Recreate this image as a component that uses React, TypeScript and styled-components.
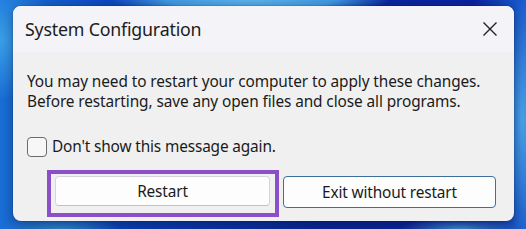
import React from 'react';
import styled, { createGlobalStyle } from 'styled-components';

const GlobalStyle = createGlobalStyle`
  html, body {
    margin: 0;
    padding: 0;
  }
  body {
    font-family: "Noto Sans", "Open Sans", sans-serif;
    color: #1b1b1b;
  }
`;

const Desktop = styled.div`
  width: 526px;
  height: 229px;
  box-sizing: border-box;
  padding: 6px 12px 8px 13px;
  overflow: hidden;
  background:
    radial-gradient(ellipse 140px 16px at 250px 0px, #5fb4ee 0%, #3f98e0 60%, rgba(63, 152, 224, 0) 100%),
    radial-gradient(ellipse 60px 60px at 0px 40px, #3aa0ea 0%, rgba(58, 160, 234, 0) 100%),
    radial-gradient(ellipse 20px 120px at 522px 120px, #4aa6ec 0%, rgba(74, 166, 236, 0) 100%),
    radial-gradient(ellipse 60px 12px at 460px 229px, #3d8fd8 0%, rgba(61, 143, 216, 0) 100%),
    radial-gradient(ellipse 60px 14px at 60px 229px, #2f88d0 0%, rgba(47, 136, 208, 0) 100%),
    linear-gradient(90deg, #1a6fd8 0%, #0b3fb8 25%, #0a2a9c 60%, #0b22a0 90%, #1c5fd0 100%);
`;

const Dialog = styled.div`
  width: 501px;
  height: 215px;
  box-sizing: border-box;
  border-radius: 8px;
  background: #f0f0f1;
  overflow: hidden;
  display: flex;
  flex-direction: column;
  box-shadow: 0 0 0 1px rgba(0, 0, 0, 0.08), 0 4px 14px rgba(0, 0, 20, 0.35);
`;

const TitleBar = styled.div`
  height: 46px;
  flex: none;
  display: flex;
  align-items: center;
  justify-content: space-between;
  padding: 0 12px 0 12px;
  background: #f3f3f8;
`;

const Title = styled.span`
  font-size: 17.8px;
  color: #1c1c1c;
  letter-spacing: -0.2px;
`;

const CloseButton = styled.button`
  width: 24px;
  height: 24px;
  border: none;
  background: transparent;
  padding: 0;
  display: flex;
  align-items: center;
  justify-content: center;
  color: #222;
`;

const Body = styled.div`
  flex: 1;
  display: flex;
  flex-direction: column;
  padding: 20px 14px 0 14px;
`;

const Message = styled.p`
  margin: 0;
  font-size: 15.4px;
  line-height: 20px;
  color: #1a1a1a;
  letter-spacing: -0.1px;
`;

const CheckRow = styled.label`
  display: flex;
  align-items: center;
  gap: 5px;
  margin-top: 25px;
  font-size: 15.4px;
  line-height: 20px;
  letter-spacing: -0.15px;
  color: #1a1a1a;
`;

const CheckBox = styled.span`
  width: 18px;
  height: 18px;
  border: 1px solid #6a6a6a;
  border-radius: 4px;
  background: #f7f7f7;
  flex: none;
`;

const ButtonRow = styled.div`
  display: flex;
  gap: 13px;
  margin-top: 19px;
  padding-left: 28px;
`;

const Highlight = styled.div`
  position: relative;
  &::after {
    content: '';
    position: absolute;
    top: -6px;
    left: -8px;
    right: -9px;
    bottom: -9px;
    border: 4px solid #8b4fc9;
    pointer-events: none;
  }
`;

const Button = styled.button<{ $primary?: boolean }>`
  height: ${(p) => (p.$primary ? '32px' : '30px')};
  width: ${(p) => (p.$primary ? '213px' : '215px')};
  box-sizing: border-box;
  font-family: "Noto Sans", "Open Sans", sans-serif;
  font-size: 15.4px;
  letter-spacing: -0.15px;
  color: #1a1a1a;
  background: #fdfdfd;
  border-radius: 4px;
  border: 1px solid ${(p) => (p.$primary ? '#3f6f9c' : '#d6d6d6')};
  border-bottom-color: ${(p) => (p.$primary ? '#3f6f9c' : '#c2c2c2')};
  padding: 0;
`;

export default function App() {
  return (
    <>
      <GlobalStyle />
      <Desktop>
        <Dialog>
          <TitleBar>
            <Title>System Configuration</Title>
            <CloseButton aria-label="Close">
              <svg width="16" height="16" viewBox="0 0 16 16">
                <path d="M1.5 1.5 L14.5 14.5 M14.5 1.5 L1.5 14.5" stroke="#222" strokeWidth="1.4" fill="none" />
              </svg>
            </CloseButton>
          </TitleBar>
          <Body>
            <Message>
              You may need to restart your computer to apply these changes.
              <br />
              Before restarting, save any open files and close all programs.
            </Message>
            <CheckRow>
              <CheckBox />
              Don't show this message again.
            </CheckRow>
            <ButtonRow>
              <Highlight>
                <Button>Restart</Button>
              </Highlight>
              <Button $primary>Exit without restart</Button>
            </ButtonRow>
          </Body>
        </Dialog>
      </Desktop>
    </>
  );
}
